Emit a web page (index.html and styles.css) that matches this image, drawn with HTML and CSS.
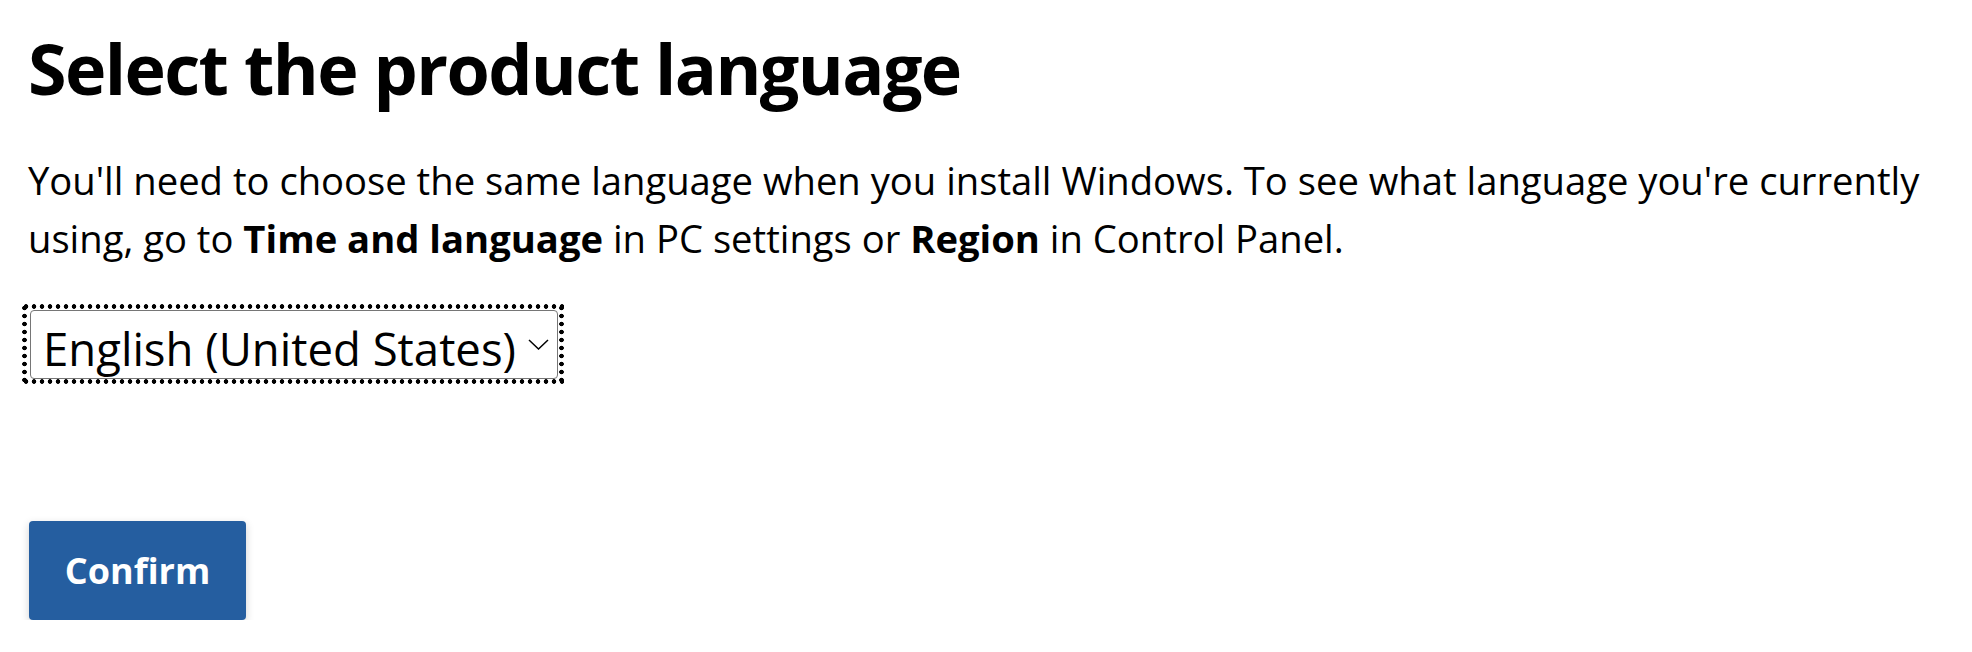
FILE: index.html
```html
<!DOCTYPE html>
<html lang="en">
<head>
<meta charset="utf-8">
<title>Select the product language</title>
<link rel="stylesheet" href="styles.css">
</head>
<body>
<main class="page">
  <h1 class="title">Select the product language</h1>
  <p class="intro">You'll need to choose the same language when you install Windows. To see what language you're currently using, go to <strong>Time and language</strong> in PC settings or <strong>Region</strong> in Control Panel.</p>
  <div class="select-wrap">
    <div class="select">
      <span class="select-value">English (United States)</span>
      <svg class="chevron" width="21" height="11" viewBox="0 0 21 11" aria-hidden="true"><path d="M1 1 L10.5 10 L20 1" fill="none" stroke="#000" stroke-width="1.5"/></svg>
    </div>
  </div>
  <div class="actions">
    <button class="btn-primary" type="button">Confirm</button>
  </div>
</main>
</body>
</html>
```
FILE: styles.css
```css
html, body {
  margin: 0;
  padding: 0;
  background: #ffffff;
}
body {
  font-family: "Open Sans", "Noto Sans", "Liberation Sans", sans-serif;
  color: #000000;
}
.page {
  display: flex;
  flex-direction: column;
  align-items: flex-start;
  padding: 0 28px;
}
.title {
  font-size: 70px;
  font-weight: 700;
  letter-spacing: -1.6px;
  line-height: 80px;
  margin: 28px 0 0 0;
}
.intro {
  font-size: 38.2px;
  line-height: 58px;
  margin: 43px 0 0 0;
  max-width: 1910px;
}
.intro strong {
  font-weight: 700;
}
.select-wrap {
  margin: 37px 0 0 -6px;
  padding: 6px 6px 5px 8px;
  background:
    radial-gradient(circle at 50% 50%, #000 2px, rgba(0,0,0,0) 2.6px) left top / 8px 5px repeat-x,
    radial-gradient(circle at 50% 50%, #000 2px, rgba(0,0,0,0) 2.6px) left bottom / 8px 5px repeat-x,
    radial-gradient(circle at 50% 50%, #000 2px, rgba(0,0,0,0) 2.6px) left top / 5px 8px repeat-y,
    radial-gradient(circle at 50% 50%, #000 2px, rgba(0,0,0,0) 2.6px) right top / 5px 8px repeat-y;
}
.select {
  display: flex;
  align-items: center;
  gap: 12px;
  height: 69px;
  width: 528px;
  box-sizing: border-box;
  border: 1px solid #767676;
  border-radius: 4px;
  padding: 0 9px 0 12px;
  font-size: 45.5px;
  background: #ffffff;
}
.select-value {
  flex: 1;
  white-space: nowrap;
  margin-top: 6px;
}
.chevron {
  flex: none;
}
.actions {
  margin-top: 137px;
  margin-left: 1px;
}
.btn-primary {
  font-family: inherit;
  font-size: 36px;
  font-weight: 700;
  color: #ffffff;
  background: #255ea0;
  border: none;
  border-radius: 4px;
  width: 217px;
  height: 99px;
  box-shadow: 0 3px 8px rgba(0, 0, 0, 0.18);
  cursor: pointer;
}
```
